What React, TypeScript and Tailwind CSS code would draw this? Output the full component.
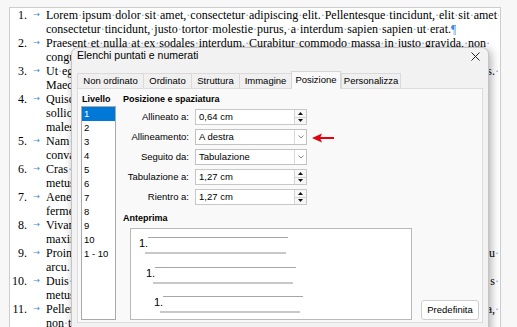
import React from "react";

type DocLine = { n?: string; t: string; e?: string; p?: boolean };

const docLines: DocLine[] = [
  { n: "1.", t: "Lorem ipsum dolor sit amet, consectetur adipiscing elit. Pellentesque tincidunt, elit sit amet " },
  { t: "consectetur tincidunt, justo tortor molestie purus, a interdum sapien sapien ut erat.", p: true },
  { n: "2.", t: "Praesent et nulla at ex sodales interdum. Curabitur commodo massa in justo gravida, non " },
  { t: "congue lectus dictum. Nunc eget nibh sed ante porta aliquet vitae in est." },
  { n: "3.", t: "Ut egestas lorem sed nisl viverra, vitae posuere velit feugiat integer", e: "us. " },
  { t: "Maecenas vel arcu id magna rutrum ultrices ac et lectus." },
  { n: "4.", t: "Quisque consequat augue vitae mauris tristique, nec pretium" },
  { t: "sollicitudin nulla. Donec ut orci vel ligula aliquam" },
  { t: "malesuada in vitae nisi." },
  { n: "5.", t: "Nam volutpat sem quis lorem congue, at luctus" },
  { t: "convallis. Morbi at dui vitae leo." },
  { n: "6.", t: "Cras sagittis tortor ac ante varius, sed ornare" },
  { t: "metus gravida." },
  { n: "7.", t: "Aenean finibus lacus id justo tincidunt, et" },
  { t: "fermentum sem euismod." },
  { n: "8.", t: "Vivamus elementum purus eget sem blandit" },
  { t: "maximus in nisi." },
  { n: "9.", t: "Proin gravida dolor id tellus efficitur", e: "eu " },
  { t: "arcu. Vestibulum non magna." },
  { n: "10.", t: "Duis sodales neque nec lorem facilisis", e: "s " },
  { t: "metus quis lacinia." },
  { n: "11.", t: "Pellentesque habitant morbi tristique senectus", e: "a, " },
  { t: "non tellus vitae elit." },
];

const tabs = [
  { label: "Non ordinato", w: "w-[66px]" },
  { label: "Ordinato", w: "w-[48px]" },
  { label: "Struttura", w: "w-[48px]" },
  { label: "Immagine", w: "w-[52px]" },
  { label: "Posizione", w: "w-[50px]", active: true },
  { label: "Personalizza", w: "w-[60px]" },
];

const levels = ["1", "2", "3", "4", "5", "6", "7", "8", "9", "10", "1 - 10"];

// spaces shown as formatting marks, like the writer does
const Marked = ({ text }: { text: string }) => {
  const words = text.split(" ");
  return (
    <>
      {words.map((w, i) => (
        <React.Fragment key={i}>
          {i > 0 && <span className="text-[#7ba3d4]">·</span>}
          {w}
        </React.Fragment>
      ))}
    </>
  );
};

const Spin = ({ value }: { value: string }) => (
  <div className="flex h-[16px] w-[112px] border border-[#c8c8c8] bg-white">
    <span className="flex-1 pl-[3px] leading-[14px]">{value}</span>
    <div className="flex w-[12px] flex-col border-l border-[#d4d4d4] bg-[#f7f7f7]">
      <div className="flex flex-1 items-center justify-center border-b border-[#d4d4d4]">
        <svg width="5" height="3" viewBox="0 0 5 3">
          <polygon points="0,3 2.5,0 5,3" fill="#111" />
        </svg>
      </div>
      <div className="flex flex-1 items-center justify-center">
        <svg width="5" height="3" viewBox="0 0 5 3">
          <polygon points="0,0 5,0 2.5,3" fill="#111" />
        </svg>
      </div>
    </div>
  </div>
);

const Combo = ({ value }: { value: string }) => (
  <div className="flex h-[16px] w-[112px] border border-[#c2c2c2] bg-white">
    <span className="flex-1 pl-[3px] leading-[14px]">{value}</span>
    <div className="flex w-[12px] items-center justify-center border-l border-[#dadada]">
      <svg width="6" height="4" viewBox="0 0 6 4">
        <polyline points="0.5,0.5 3,3 5.5,0.5" fill="none" stroke="#8a8a8a" strokeWidth="1" />
      </svg>
    </div>
  </div>
);

export default function App() {
  return (
    <div className="relative h-[327px] w-[517px] overflow-hidden bg-[#f7f7f7] pl-[9px] pt-[7px]">
      {/* document page */}
      <div className="h-[330px] w-[492px] border-l border-r border-t border-[#cdcdcd] bg-white pr-[1px] font-['Liberation_Serif',serif] text-[12px] text-black">
        {docLines.map((l, i) => (
          <div key={i} className="flex h-[14px] leading-[14px]">
            <span className="w-[17px] shrink-0 whitespace-nowrap text-right">{l.n ?? ""}</span>
            <span className="w-[19px] shrink-0 text-center font-['DejaVu_Sans',sans-serif] text-[8px] text-[#3a8de0]">
              {l.n ? "→" : ""}
            </span>
            <div className="flex min-w-0 flex-1 justify-between">
              <span className="min-w-0 overflow-hidden whitespace-nowrap">
                <Marked text={l.t} />
                {l.p && <span className="text-[#3a8de0]">¶</span>}
              </span>
              {l.e && (
                <span className="shrink-0 whitespace-nowrap">
                  <Marked text={l.e} />
                </span>
              )}
            </div>
          </div>
        ))}
      </div>

      {/* dialog window */}
      <div className="absolute left-[71px] top-[47px] h-[300px] w-[418px] rounded-t-[7px] border border-[#c4c4c4] bg-[#f2f2f2] font-['Liberation_Sans',Arial,sans-serif] text-[9.5px] text-black shadow-[2px_2px_10px_rgba(0,0,0,0.32)]">
        <div className="flex h-[15px] items-center justify-between pl-[5px] pr-[8px]">
          <span className="text-[10.5px]">Elenchi puntati e numerati</span>
          <svg width="9" height="9" viewBox="0 0 9 9" className="mt-[1px]">
            <path d="M0.5 0.5 L8.5 8.5 M8.5 0.5 L0.5 8.5" stroke="#222" strokeWidth="1" />
          </svg>
        </div>

        <div className="ml-[5px] mt-[8px] flex items-end">
          {tabs.map((t) =>
            t.active ? (
              <div
                key={t.label}
                className={`relative z-10 -mb-px flex h-[18px] ${t.w} items-center justify-center border-l border-r border-t border-[#d6d6d6] bg-[#f9f9f9]`}
              >
                {t.label}
              </div>
            ) : (
              <div
                key={t.label}
                className={`flex h-[15px] ${t.w} items-center justify-center border-l border-t border-[#dadada] bg-[#f0f0f0] last:border-r`}
              >
                {t.label}
              </div>
            )
          )}
        </div>

        <div className="relative ml-[5px] h-[235px] w-[406px] border border-[#dcdcdc] bg-[#f9f9f9]">
          <div className="flex pl-[3px] pt-[4px]">
            <div className="w-[35px] shrink-0">
              <div className="h-[13px] pl-[1px] text-[9px] font-bold leading-[13px]">Livello</div>
              <div className="h-[214px] border border-[#a9a9a9] bg-white">
                {levels.map((lv, i) => (
                  <div
                    key={lv}
                    className={`h-[14px] pl-[2px] leading-[14px] ${i === 0 ? "bg-[#0078d7] text-white" : ""}`}
                  >
                    {lv}
                  </div>
                ))}
              </div>
            </div>

            <div className="ml-[7px] flex-1">
              <div className="h-[13px] text-[9px] font-bold leading-[13px]">Posizione e spaziatura</div>
              <div className="mt-[3px] grid grid-cols-[66px_112px] items-center gap-x-[6px] gap-y-[4px]">
                <span className="text-right">Allineato a:</span>
                <Spin value="0,64 cm" />
                <span className="text-right">Allineamento:</span>
                <Combo value="A destra" />
                <span className="text-right">Seguito da:</span>
                <Combo value="Tabulazione" />
                <span className="text-right">Tabulazione a:</span>
                <Spin value="1,27 cm" />
                <span className="text-right">Rientro a:</span>
                <Spin value="1,27 cm" />
              </div>

              <div className="mt-[7px] h-[12px] text-[9px] font-bold leading-[12px]">Anteprima</div>
              <div className="mt-[4px] flex items-end">
                <div className="ml-[7px] h-[92px] w-[282px] border border-[#b9b9b9] bg-white pt-[8px] text-[11px]">
                  <div className="ml-[8px] flex items-start">
                    <span className="w-[9px] leading-[12px]">1.</span>
                    <div className="h-px w-[140px] bg-[#a6a6a6]" />
                  </div>
                  <div className="ml-[14px] mt-[3px] h-[2px] w-[141px] bg-[#c8c8c8]" />
                  <div className="ml-[15px] mt-[13px] flex items-start">
                    <span className="w-[9px] leading-[12px]">1.</span>
                    <div className="h-px w-[141px] bg-[#a6a6a6]" />
                  </div>
                  <div className="ml-[22px] mt-[3px] h-[2px] w-[140px] bg-[#c8c8c8]" />
                  <div className="ml-[23px] mt-[12px] flex items-start">
                    <span className="w-[9px] leading-[12px]">1.</span>
                    <div className="h-px w-[140px] bg-[#a6a6a6]" />
                  </div>
                  <div className="ml-[29px] mt-[3px] h-[2px] w-[140px] bg-[#c8c8c8]" />
                </div>
                <button className="ml-[9px] h-[20px] w-[58px] rounded-[3px] border border-[#cfcfcf] bg-white text-[9.5px]">
                  Predefinita
                </button>
              </div>
            </div>
          </div>

          {/* red annotation arrow */}
          <svg width="22" height="10" viewBox="0 0 22 10" className="absolute left-[234px] top-[44px]">
            <polygon points="0,5 10,0.5 8,5 10,9.5" fill="#e3000f" />
            <rect x="8" y="4" width="14" height="2" fill="#e3000f" />
          </svg>
        </div>
      </div>
    </div>
  );
}
